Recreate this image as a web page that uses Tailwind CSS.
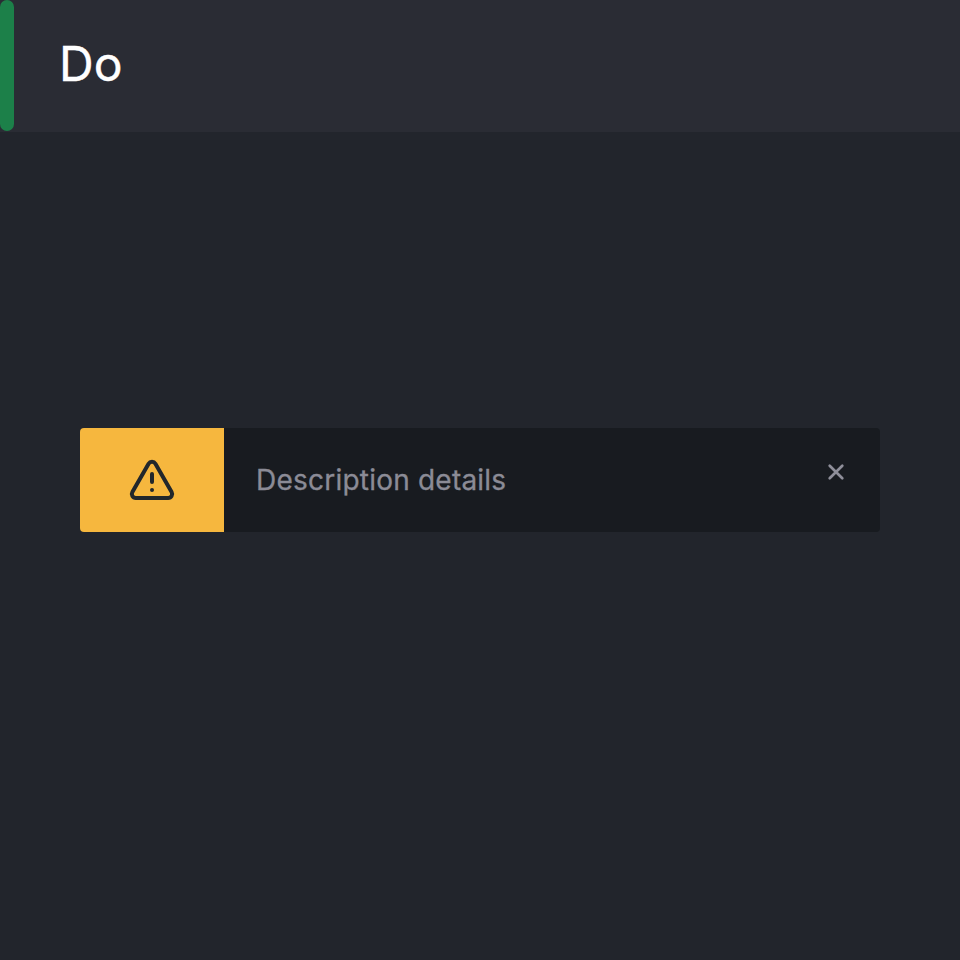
<!DOCTYPE html>
<html lang="en">
<head>
<meta charset="utf-8">
<title>Do</title>
<script src="https://cdn.jsdelivr.net/npm/@tailwindcss/browser@4"></script>
</head>
<body class="flex h-screen flex-col overflow-hidden bg-[#22252c] font-['Inter',sans-serif]">
  <header class="flex h-[132px] shrink-0 bg-[#2a2c34]">
    <div class="h-[131px] w-3.5 rounded-lg bg-[#1c8049]"></div>
    <h1 class="pt-8 pl-[45px] text-[48px] leading-16 font-normal text-white [-webkit-text-stroke:0.4px_white]">Do</h1>
  </header>
  <main class="px-20 pt-[296px]">
    <div class="flex h-[104px] overflow-hidden rounded bg-[#181b20]">
      <div class="flex w-36 items-center justify-center bg-[#f6b73e]">
        <svg class="size-12" viewBox="0 0 24 24" fill="none" stroke="#22272b" stroke-width="2" stroke-linecap="round" stroke-linejoin="round"><path d="M10.29 3.86 2.2 18a2 2 0 0 0 1.71 3h16.18a2 2 0 0 0 1.71-3L13.71 3.86a2 2 0 0 0-3.42 0Z"/><path d="M12 9v4M12 17h.01"/></svg>
      </div>
      <p class="flex-1 pt-8 pl-8 text-[28px] leading-10 tracking-[0.22px] text-[#8b8b96] [-webkit-text-stroke:0.3px_#8b8b96]">Description details</p>
      <button class="mt-7 mr-7 size-8" aria-label="Close">
        <svg class="size-8" viewBox="0 0 32 32" fill="none" stroke="#8f8f9a" stroke-width="2.7" stroke-linecap="round"><path d="m9.7 9.7 12.6 12.6M22.3 9.7 9.7 22.3"/></svg>
      </button>
    </div>
  </main>
</body>
</html>
